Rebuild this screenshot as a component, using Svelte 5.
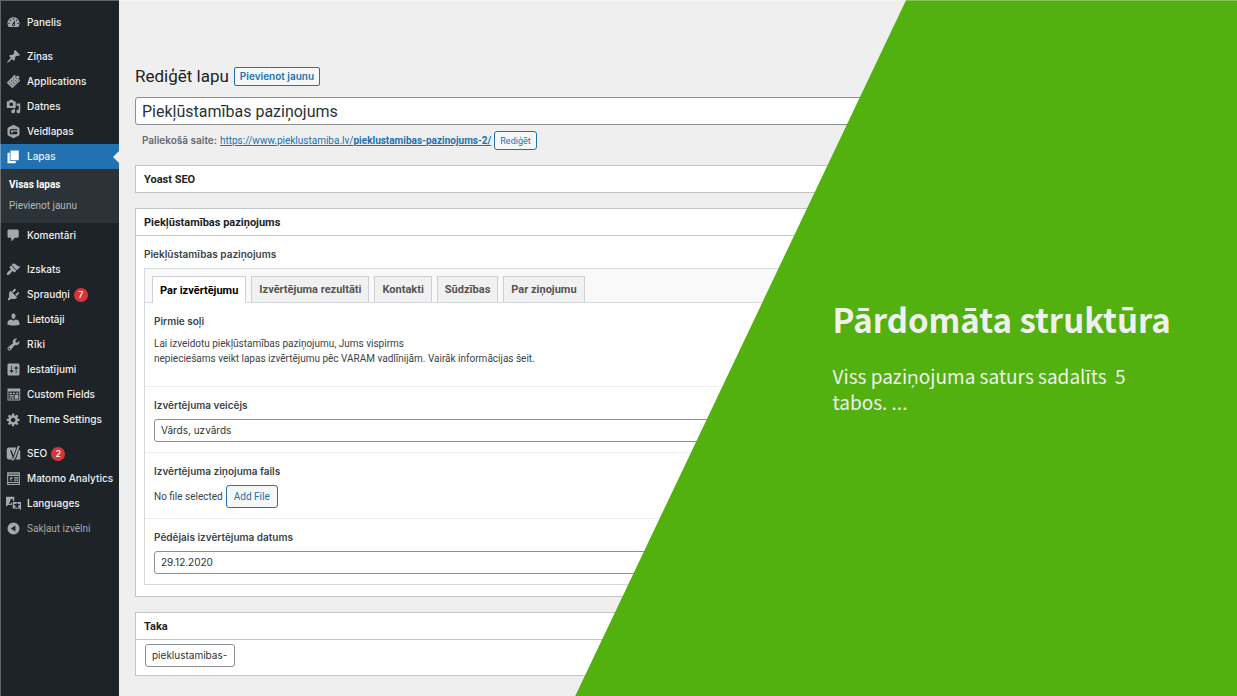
<script>
  const icons = {
    dashboard: 'M3.76 16h12.48c1.1-1.37 1.76-3.11 1.76-5 0-4.42-3.58-8-8-8s-8 3.58-8 8c0 1.89.66 3.63 1.76 5zM10 4c.55 0 1 .45 1 1s-.45 1-1 1-1-.45-1-1 .45-1 1-1zM6 6c.55 0 1 .45 1 1s-.45 1-1 1-1-.45-1-1 .45-1 1-1zm8 0c.55 0 1 .45 1 1s-.45 1-1 1-1-.45-1-1 .45-1 1-1zm-5.37 5.55L12 7v6c0 1.1-.9 2-2 2s-2-.9-2-2c0-.57.24-1.08.63-1.45zM4 10c.55 0 1 .45 1 1s-.45 1-1 1-1-.45-1-1 .45-1 1-1zm12 0c.55 0 1 .45 1 1s-.45 1-1 1-1-.45-1-1 .45-1 1-1zm-5 3c0-.55-.45-1-1-1s-1 .45-1 1 .45 1 1 1 1-.45 1-1z',
    pin: 'M10.44 3.02l1.82-1.82 6.36 6.35-1.83 1.82c-1.05-.68-2.48-.57-3.41.36l-.75.75c-.92.93-1.04 2.35-.35 3.41l-1.83 1.82-2.41-2.41-2.8 2.79c-.42.42-3.38 2.71-3.8 2.29s1.86-3.39 2.28-3.81l2.79-2.79L4.1 9.36l1.83-1.82c1.05.69 2.48.57 3.4-.36l.75-.75c.93-.92 1.05-2.35.36-3.41z',
    applications: 'M1 11.500L11.500 1l2.500 2.200 2-1.200 2 2-1.200 2.200L19 8.500 8.500 19zM4.200 11.500l.9.900.9-.9-.9-.9zM6.700 9l.9.900.9-.9-.9-.9zM9.200 6.500l.9.900.9-.9-.9-.9zM11.700 4l.9.900.9-.9-.9-.9zM6.200 13.500l.9.900.9-.9-.9-.9zM8.700 11l.9.900.9-.9-.9-.9zM11.200 8.500l.9.900.9-.9-.9-.9zM13.700 6l.9.900.9-.9-.9-.9zM8.200 15.500l.9.900.9-.9-.9-.9zM10.700 13l.9.900.9-.9-.9-.9zM13.200 10.500l.9.900.9-.9-.9-.9zM15.500 8.200l.9.900.9-.9-.9-.9z',
    media: 'M13 11V4c0-.55-.45-1-1-1h-1.67L9 1H5L3.67 3H2c-.55 0-1 .45-1 1v7c0 .55.45 1 1 1h10c.55 0 1-.45 1-1zM7 4.5c1.38 0 2.5 1.12 2.5 2.5S8.380 9.500 7 9.500 4.500 8.380 4.500 7 5.620 4.500 7 4.500zM14 6h5v10.500c0 1.380-1.120 2.500-2.500 2.500S14 17.880 14 16.500s1.120-2.500 2.500-2.500c.17 0 .34.02.5.05V9h-3V6zm-4 8.050V13h2v3.500c0 1.380-1.120 2.500-2.500 2.500S7 17.880 7 16.500 8.120 14 9.500 14c.17 0 .34.02.5.05z',
    forms: 'M10 1l6.500 3.300Q18 5 18 6.500v7q0 1.500-1.500 2.200L10 19l-6.500-3.300Q2 15 2 13.500v-7Q2 5 3.500 4.300zM7.500 6.500Q5 6.500 5 9v4.500h10V10H9v1.500H6.700V9.300q0-1.100 1.100-1.100H15V6.500z',
    page: 'M6 15V2h11v13H6zm-1 1h8v3H2V5h3v11z',
    comment: 'M4 2h11c1.100 0 2 .9 2 2v7c0 1.100-.9 2-2 2h-3l-5 5v-5H4c-1.100 0-2-.9-2-2V4c0-1.100.9-2 2-2z',
    appearance: 'M14.480 11.060L7.410 3.990l1.500-1.500c.5-.56 2.300-.47 3.510.32 1.210.8 1.430 1.280 2.910 2.100 1.180.64 2.450 1.260 4.450.85zm-.71.71L6.700 4.700 4.930 6.470c-.39.39-.39 1.020 0 1.410l1.060 1.060c.39.39.39 1.030 0 1.420-.6.6-1.430 1.110-2.210 1.690-.35.26-.7.53-1.010.84C1.430 14.230.4 16.080 1.400 17.070c.99 1 2.840-.03 4.180-1.360.31-.31.58-.66.85-1.020.57-.78 1.080-1.610 1.690-2.210.39-.39 1.020-.39 1.410 0l1.060 1.060c.39.39 1.020.39 1.410 0z',
    plugins: 'M13.110 4.360L9.870 7.600 8 5.730l3.240-3.240c.35-.34 1.050-.2 1.560.32.52.51.66 1.210.31 1.550zm-8 1.770l.91-1.120 9.010 9.010-1.190.84c-.71.71-2.630 1.160-3.820 1.160H6.140L4.900 17.260c-.59.59-1.540.59-2.120 0-.59-.58-.59-1.530 0-2.120l1.240-1.240v-3.880c0-1.130.4-3.190 1.090-3.890zm7.260 3.970l3.240-3.240c.34-.35 1.040-.21 1.550.31.52.51.66 1.210.31 1.550l-3.240 3.250z',
    users: 'M10 9.250c-2.270 0-2.730-3.440-2.730-3.440C7 4.020 7.820 2 9.970 2c2.160 0 2.980 2.020 2.710 3.810 0 0-.41 3.440-2.680 3.440zm0 2.570L12.720 10c3 0 5.280 2.330 5.280 4.530v2.490s-4.400 1.130-8 1.130c-3.650 0-8-1.130-8-1.130v-2.490c0-2.250 2.200-4.480 5.230-4.480z',
    tools: 'M16.680 9.770c-1.340 1.340-3.300 1.670-4.950.99l-5.410 6.520c-.99.99-2.590.99-3.580 0s-.99-2.590 0-3.570l6.520-5.420c-.68-1.650-.35-3.610.99-4.950 1.280-1.280 3.120-1.620 4.720-1.060l-2.890 2.890 2.820 2.820 2.860-2.870c.53 1.580.18 3.390-1.080 4.650zM3.810 16.210c.4.39 1.040.39 1.430 0 .4-.4.4-1.040 0-1.430-.39-.4-1.030-.4-1.430 0-.39.39-.39 1.030 0 1.430z',
    settings: 'M18 16V4c0-1.100-.9-2-2-2H4c-1.100 0-2 .9-2 2v12c0 1.100.9 2 2 2h12c1.100 0 2-.9 2-2zM8 11h1c.55 0 1 .45 1 1s-.45 1-1 1H8v1.500c0 .28-.22.5-.5.5s-.5-.22-.5-.5V13H6c-.55 0-1-.45-1-1s.45-1 1-1h1V5.500c0-.28.22-.5.5-.5s.5.22.5.5V11zm5-2h-1c-.55 0-1-.45-1-1s.45-1 1-1h1V5.500c0-.28.22-.5.5-.5s.5.22.5.5V7h1c.55 0 1 .45 1 1s-.45 1-1 1h-1v5.500c0 .28-.22.5-.5.5s-.5-.22-.5-.5V9z',
    fields: 'M2 2h17v16H2zM3.300 6v10.700h14.400V6zM4.600 7.500h3.700v2H4.600zM9.300 7.500h3v2h-3zM13.300 7.500h3.200v2h-3.200zM4.600 10.500h5.700v2H4.600zM11.500 10.500h5v5h-5zM4.600 13.500h2v2h-2zM7.300 13.500h3v2h-3z',
    gear: 'M18 12h-2.180c-.17.7-.44 1.350-.81 1.930l1.540 1.540-2.100 2.100-1.540-1.540c-.58.36-1.230.63-1.910.79V19H8v-2.180c-.68-.16-1.330-.43-1.910-.79l-1.540 1.540-2.120-2.120 1.540-1.540c-.36-.58-.63-1.230-.79-1.910H1V9.030h2.170c.16-.7.44-1.350.8-1.940L2.430 5.550l2.100-2.100 1.540 1.540c.58-.37 1.240-.64 1.930-.81V2h3v2.180c.68.16 1.330.43 1.910.79l1.540-1.540 2.120 2.120-1.540 1.540c.36.59.64 1.240.8 1.940H18V12zm-8.500 1.500c1.660 0 3-1.340 3-3s-1.340-3-3-3-3 1.340-3 3 1.340 3 3 3z',
    yoast: 'M4 2h9.800L10 12.500 7.300 5.500H5.300l3.300 8.800q.3.900 0 1.700-.6 1.700-2.600 2H4q-3 0-3-3V5q0-3 3-3zM15.700 0h2.800l-6 15.500Q11 19.200 7.500 19.700v-1.900q1.900-.4 2.800-2.400zM17.400 5Q19 5 19 7v11h-6.500q1.200-1.200 1.700-2.700z',
    analytics: 'M1.500 1.500h17v17h-17zM3 3.500v1.300h14V3.500zM3 6.500v8h14v-8zM3 16v1.200h14V16zM8.500 8v2.500H6L8.500 13a2.600 2.600 0 1 1 0-5zM11 8h5v2h-5zM11 11h2v2.500h-2zM14 11h2v2.500h-2z',
    languages: 'M0 1h11v6H9.500l-.7-3H6.500L4 11h2l.5-2H8v3H3L0 14zM9 8h11v11l-2-2H9zM14 9v1.500h-3.500V12h1.300q.7 2 1.700 2.700-1 .6-2.500.8v1q2-.2 3.500-1.100 1.500.9 3.500 1.100v-1q-1.500-.2-2.500-.8 1-.9 1.700-2.700h1.300v-1.500H15.500V9z',
    collapse: 'M10 2a8 8 0 1 1 0 16 8 8 0 0 1 0-16zM12.500 6l-6 4 6 4z'
  };

  const menu = [
    [{ label: 'Panelis', icon: 'dashboard' }],
    [
      { label: 'Ziņas', icon: 'pin' },
      { label: 'Applications', icon: 'applications' },
      { label: 'Datnes', icon: 'media' },
      { label: 'Veidlapas', icon: 'forms' },
      { label: 'Lapas', icon: 'page', current: true, children: ['Visas lapas', 'Pievienot jaunu'] },
      { label: 'Komentāri', icon: 'comment' }
    ],
    [
      { label: 'Izskats', icon: 'appearance' },
      { label: 'Spraudņi', icon: 'plugins', count: 7 },
      { label: 'Lietotāji', icon: 'users' },
      { label: 'Rīki', icon: 'tools' },
      { label: 'Iestatījumi', icon: 'settings' },
      { label: 'Custom Fields', icon: 'fields' },
      { label: 'Theme Settings', icon: 'gear' }
    ],
    [
      { label: 'SEO', icon: 'yoast', count: 2 },
      { label: 'Matomo Analytics', icon: 'analytics' },
      { label: 'Languages', icon: 'languages' }
    ]
  ];

  const tabs = ['Par izvērtējumu', 'Izvērtējuma rezultāti', 'Kontakti', 'Sūdzības', 'Par ziņojumu'];
  let activeTab = $state(0);
  let title = $state('Piekļūstamības paziņojums');
  let author = $state('Vārds, uzvārds');
  let date = $state('29.12.2020');
  let slug = $state('pieklustamibas-');
</script>

{#snippet glyph(name)}
  <svg class="icon" viewBox="0 0 20 20" aria-hidden="true"><path fill-rule="evenodd" d={icons[name]} /></svg>
{/snippet}

<div class="slide">
  <nav class="sidebar">
    {#each menu as group}
      <ul class="group">
        {#each group as item}
          <li>
            <a class="item" class:current={item.current} href="#top">
              {@render glyph(item.icon)}
              <span>{item.label}</span>
              {#if item.count}<span class="count">{item.count}</span>{/if}
            </a>
            {#if item.children}
              <ul class="submenu">
                {#each item.children as child, i}
                  <li><a class:selected={i === 0} href="#top">{child}</a></li>
                {/each}
              </ul>
            {/if}
          </li>
        {/each}
      </ul>
    {/each}
    <button class="item collapse" type="button">
      {@render glyph('collapse')}
      <span>Sakļaut izvēlni</span>
    </button>
  </nav>

  <main class="editor">
    <header class="heading">
      <h1>Rediģēt lapu</h1>
      <a class="add-new" href="#top">Pievienot jaunu</a>
    </header>
    <input class="title" type="text" aria-label="Virsraksts" bind:value={title} />
    <div class="permalink">
      <strong>Paliekošā saite:</strong>
      <a href="#top">https://www.pieklustamiba.lv/<b>pieklustamibas-pazinojums-2/</b></a>
      <button class="edit" type="button">Rediģēt</button>
    </div>

    <section class="box yoast"><h2>Yoast SEO</h2></section>

    <section class="box">
      <h2>Piekļūstamības paziņojums</h2>
      <div class="inside">
        <h3>Piekļūstamības paziņojums</h3>
        <div class="fields">
          <div class="tabs" role="tablist">
            {#each tabs as tab, i}
              <button type="button" role="tab" class:active={i === activeTab} aria-selected={i === activeTab} onclick={() => (activeTab = i)}>{tab}</button>
            {/each}
          </div>
          <div class="field message">
            <h3>Pirmie soļi</h3>
            <p>Lai izveidotu piekļūstamības paziņojumu, Jums vispirms<br />nepieciešams veikt lapas izvērtējumu pēc VARAM vadlīnijām. Vairāk informācijas šeit.</p>
          </div>
          <div class="field">
            <label for="author">Izvērtējuma veicējs</label>
            <input id="author" type="text" bind:value={author} />
          </div>
          <div class="field">
            <h3>Izvērtējuma ziņojuma fails</h3>
            <div class="file">
              <span>No file selected</span>
              <button type="button">Add File</button>
            </div>
          </div>
          <div class="field">
            <label for="date">Pēdējais izvērtējuma datums</label>
            <input id="date" type="text" bind:value={date} />
          </div>
        </div>
      </div>
    </section>

    <section class="box">
      <h2><label for="slug">Taka</label></h2>
      <div class="slug"><input id="slug" type="text" bind:value={slug} /></div>
    </section>
  </main>

  <aside class="caption">
    <h2>Pārdomāta struktūra</h2>
    <p>Viss paziņojuma saturs sadalīts&nbsp; 5 tabos. ...</p>
  </aside>
</div>

<style>
  :global(body) {
    background: #efefef;
  }
  .slide,
  .slide * {
    box-sizing: border-box;
  }
  .slide {
    position: relative;
    display: flex;
    min-height: 100vh;
    overflow: hidden;
    background: #efefef;
    color: #3c434a;
    font: 10px/15px Inter, 'Liberation Sans', sans-serif;
  }
  .slide::after {
    content: '';
    position: absolute;
    inset: 0;
    border: solid rgba(255, 255, 255, 0.3);
    border-width: 1px 0 0 1px;
    pointer-events: none;
  }
  h1,
  h2,
  h3,
  p,
  ul {
    margin: 0;
    padding: 0;
  }
  ul {
    list-style: none;
  }
  input,
  button {
    margin: 0;
    font-family: inherit;
    color: inherit;
  }

  .sidebar {
    flex: none;
    width: 119px;
    padding-top: 10px;
    background: #1d2327;
  }
  .group {
    margin-bottom: 9px;
  }
  .group:last-of-type {
    margin-bottom: 0;
  }
  .item {
    position: relative;
    display: flex;
    align-items: center;
    width: 100%;
    height: 25px;
    padding: 0 0 0 6px;
    border: 0;
    background: none;
    color: #f0f0f1;
    font-size: 10px;
    font-weight: 500;
    line-height: 15px;
    text-decoration: none;
    white-space: nowrap;
  }
  .icon {
    flex: none;
    width: 15px;
    height: 15px;
    margin-right: 6px;
    fill: #a2a8ad;
  }
  .current {
    background: #2271b1;
  }
  .current .icon {
    fill: #fff;
  }
  .current::after {
    content: '';
    position: absolute;
    right: 0;
    top: 50%;
    margin-top: -6px;
    border: 6px solid transparent;
    border-left: 0;
    border-right-color: #efefef;
  }
  .count {
    width: 14px;
    height: 14px;
    margin-left: 4px;
    border-radius: 50%;
    background: #d63638;
    color: #fff;
    font-size: 9px;
    line-height: 14px;
    text-align: center;
  }
  .collapse {
    color: #a7aaad;
    font-family: Roboto, sans-serif;
    font-weight: 400;
  }
  .submenu {
    padding: 5px 0 7px 9px;
    background: #2c3338;
  }
  .submenu a {
    display: block;
    color: #b4b9be;
    font-family: Roboto, sans-serif;
    line-height: 21px;
    text-decoration: none;
  }
  .submenu .selected {
    color: #fff;
    font-weight: 700;
  }

  .editor {
    flex: 1;
    min-width: 0;
    padding: 66px 16px 0;
  }
  .heading {
    display: flex;
    align-items: center;
    gap: 5px;
    margin-bottom: 10px;
  }
  h1 {
    color: #1d2327;
    font-family: Roboto, sans-serif;
    font-size: 17px;
    font-weight: 400;
    line-height: 21px;
  }
  .add-new {
    padding: 0 5px;
    border: 1px solid #2271b1;
    border-radius: 2px;
    background: #f6f7f7;
    color: #2271b1;
    font-weight: 600;
    line-height: 17px;
    text-decoration: none;
  }
  input {
    display: block;
    width: 100%;
    height: 23px;
    padding: 0 6px 1px;
    border: 1px solid #8c8f94;
    border-radius: 3px;
    background: #fff;
    color: #2c3338;
    font-size: 10px;
  }
  .title {
    height: 28px;
    padding: 0 6px;
    font-family: Roboto, sans-serif;
    font-size: 16px;
  }
  .permalink {
    display: flex;
    align-items: center;
    gap: 3px;
    margin: 6px 0 15px;
    padding-left: 7px;
    color: #646970;
    font-family: Roboto, sans-serif;
  }
  .permalink strong {
    font-family: Inter, sans-serif;
    font-weight: 600;
  }
  .permalink a {
    color: #2271b1;
  }
  .permalink b {
    font-weight: 700;
  }
  .edit,
  .file button {
    border: 1px solid #2271b1;
    border-radius: 3px;
    background: #f6f7f7;
    color: #2271b1;
  }
  .edit {
    height: 19px;
    padding: 0 5px;
    font-size: 9px;
  }

  .box {
    margin-bottom: 15px;
    border: 1px solid #c3c4c7;
    background: #fff;
  }
  .box > h2 {
    padding: 1px 8px 0;
    border-bottom: 1px solid #c3c4c7;
    color: #1d2327;
    font-family: Roboto, sans-serif;
    font-size: 11px;
    font-weight: 700;
    line-height: 25px;
  }
  .yoast > h2 {
    border-bottom: 0;
  }
  .inside {
    padding: 11px 8px;
  }
  h3,
  label {
    display: block;
    font-size: 10px;
    font-weight: 600;
    line-height: 15px;
  }
  .box > h2 label {
    font: inherit;
  }
  .fields {
    margin-top: 6px;
    border: 1px solid #d5d9dd;
  }
  .tabs {
    display: flex;
    gap: 5px;
    height: 34px;
    padding: 7px 7px 0;
    border-bottom: 1px solid #d5d9dd;
    background: #f9f9f9;
  }
  .tabs button {
    height: 26px;
    padding: 0 7px;
    border: 1px solid #ccd0d4;
    border-bottom: 0;
    background: #f1f1f1;
    color: #555;
    font-family: Roboto, sans-serif;
    font-size: 11px;
    font-weight: 700;
    white-space: nowrap;
  }
  .tabs .active {
    height: 27px;
    background: #fff;
    color: #000;
  }
  .field {
    padding: 11px 9px 10px;
    border-top: 1px solid #eee;
  }
  .field input,
  .file {
    margin-top: 6px;
  }
  .message {
    padding-bottom: 20px;
    border-top: 0;
  }
  .message p {
    margin-top: 7px;
    font-family: Roboto, sans-serif;
  }
  .file {
    display: flex;
    align-items: center;
    gap: 3px;
    font-family: Roboto, sans-serif;
  }
  .file button {
    height: 23px;
    padding: 0 7px;
    font-size: 10px;
  }
  .slug {
    padding: 4px 9px 8px;
  }
  .slug input {
    width: 90px;
  }

  .caption {
    position: absolute;
    inset: 0 0 0 auto;
    display: flex;
    flex-direction: column;
    justify-content: center;
    width: 53.5%;
    padding: 18px 60px 0 20.8%;
    background: #52b10f;
    clip-path: polygon(50% 0, 100% 0, 100% 100%, 0 100%);
    color: #f0f0f0;
    font-family: 'Noto Sans CJK SC', 'Open Sans', sans-serif;
  }
  .caption h2 {
    font-size: 33px;
    font-weight: 700;
    line-height: 40px;
    white-space: nowrap;
  }
  .caption p {
    max-width: 310px;
    margin-top: 24px;
    font-size: 19px;
    line-height: 26px;
  }
</style>
